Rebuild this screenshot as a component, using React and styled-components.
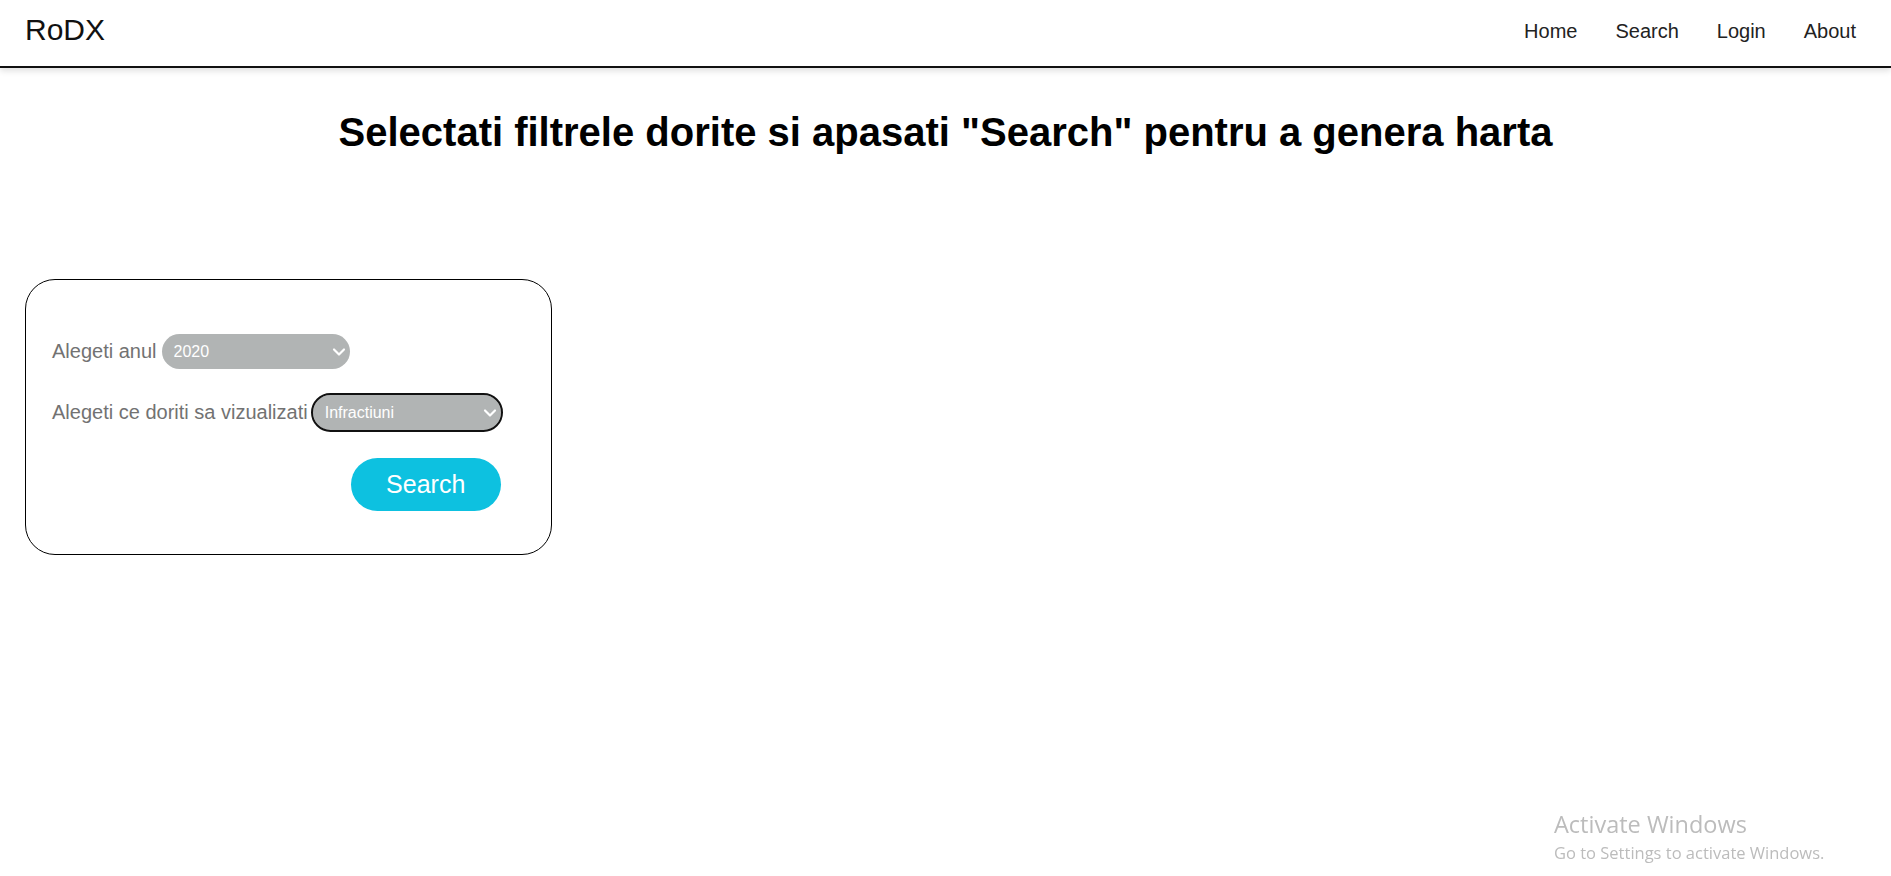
import React from 'react';
import styled, {createGlobalStyle} from "styled-components";
import {ChevronDown} from "lucide-react";

const GlobalStyle = createGlobalStyle`
  * {
    box-sizing: border-box;
  }

  html, body {
    margin: 0;
    padding: 0;
    background: #fff;
    font-family: "Liberation Sans", Arial, sans-serif;
  }
`

const App = () => {
    return (
        <>
            <GlobalStyle/>
            <Header>
                <Logo>RoDX</Logo>
                <Nav>
                    <NavLink href="#">Home</NavLink>
                    <NavLink href="#">Search</NavLink>
                    <NavLink href="#">Login</NavLink>
                    <NavLink href="#">About</NavLink>
                </Nav>
            </Header>
            <Main>
                <Title>Selectati filtrele dorite si apasati "Search" pentru a genera harta</Title>
                <Card>
                    <Form>
                        <Row>
                            <Label>Alegeti anul</Label>
                            <SelectWrap>
                                <Select defaultValue="2020">
                                    <option>2020</option>
                                    <option>2019</option>
                                    <option>2018</option>
                                </Select>
                                <Caret size={20} strokeWidth={2.6}/>
                            </SelectWrap>
                        </Row>
                        <Row>
                            <Label>Alegeti ce doriti sa vizualizati</Label>
                            <SelectWrap>
                                <Select defaultValue="Infractiuni" $focused>
                                    <option>Infractiuni</option>
                                    <option>Accidente</option>
                                </Select>
                                <Caret size={20} strokeWidth={2.6}/>
                            </SelectWrap>
                        </Row>
                        <SearchButton>Search</SearchButton>
                    </Form>
                </Card>
            </Main>
            <Watermark>
                <h3>Activate Windows</h3>
                <p>Go to Settings to activate Windows.</p>
            </Watermark>
        </>
    );
};

const Header = styled.header`
  height: 68px;
  padding: 0 35px 6px 25px;
  display: flex;
  align-items: center;
  justify-content: space-between;
  border-bottom: 2px solid #111;
  box-shadow: 0 3px 6px rgba(0, 0, 0, 0.12);
`

const Logo = styled.div`
  font-size: 30px;
  color: #111;
`

const Nav = styled.nav`
  display: flex;
  gap: 38px;
  padding-top: 2px;
`

const NavLink = styled.a`
  font-size: 20px;
  color: #222;
  text-decoration: none;
`

const Main = styled.main`
  padding: 41px 25px 0;
`

const Title = styled.h1`
  margin: 0 0 124px;
  font-size: 40px;
  line-height: 46px;
  font-weight: bold;
  text-align: center;
  color: #000;
`

const Card = styled.div`
  width: 527px;
  height: 276px;
  padding: 54px 26px 0;
  border: 1px solid #000;
  border-radius: 30px;
`

const Form = styled.form`
  display: inline-flex;
  flex-direction: column;
  gap: 26px;
`

const Row = styled.div`
  display: flex;
  align-items: center;
  gap: 5px;
`

const Label = styled.label`
  font-size: 20px;
  color: #727272;
`

const SelectWrap = styled.span`
  position: relative;
  display: inline-flex;
  align-items: center;
`

const Select = styled.select`
  appearance: none;
  width: 188px;
  height: 35px;
  padding: 0 30px 0 12px;
  border: none;
  border-radius: 18px;
  background: #b1b4b4;
  color: #fff;
  font-family: "Liberation Sans", Arial, sans-serif;
  font-size: 16px;
  outline: ${props => props.$focused ? "2px solid #111" : "none"};
`

const Caret = styled(ChevronDown)`
  position: absolute;
  right: 1px;
  color: #fff;
  pointer-events: none;
`

const SearchButton = styled.button`
  align-self: flex-end;
  width: 150px;
  height: 53px;
  margin-top: 2px;
  border: none;
  border-radius: 27px;
  background: #0dc1e0;
  color: #fff;
  font-family: "Liberation Sans", Arial, sans-serif;
  font-size: 25px;
  cursor: pointer;
`

const Watermark = styled.div`
  position: fixed;
  left: 1554px;
  bottom: 12px;
  color: #bcbcbc;
  font-family: "Open Sans", "Noto Sans", sans-serif;
  pointer-events: none;

  h3 {
    margin: 0 0 1px;
    font-size: 23.5px;
    font-weight: normal;
  }

  p {
    margin: 0;
    font-size: 16.5px;
  }
`

export default App;
